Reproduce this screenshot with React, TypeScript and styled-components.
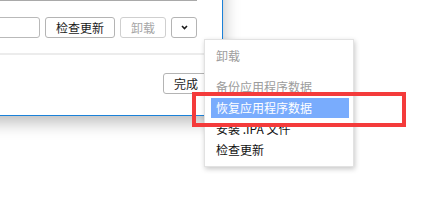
import React from 'react';
import styled, { createGlobalStyle } from 'styled-components';

const GlobalStyle = createGlobalStyle`
  html, body {
    margin: 0;
    padding: 0;
    background: #ffffff;
  }
  body {
    font-family: "Noto Sans CJK SC", "Noto Sans", sans-serif;
    font-size: 12px;
    color: #1a1a1a;
  }
`;

const Desktop = styled.div`
  position: relative;
  width: 433px;
  height: 220px;
  overflow: hidden;
  background: #ffffff;
`;

// the dialog window, mostly off the top-left of the shot
const Window = styled.div`
  position: absolute;
  left: -77px;
  top: -60px;
  width: 300px;
  height: 176px;
  box-sizing: border-box;
  border: 1px solid #1b81d8;
  background: #ffffff;
  box-shadow: 0 6px 16px rgba(0, 0, 0, 0.28);
  padding: 10px 25px 0 12px;
  display: flex;
  flex-direction: column;
`;

const ListBox = styled.div`
  height: 50px;
  box-sizing: border-box;
  border: 1px solid #a9a9a9;
  border-top: none;
`;

const Toolbar = styled.div`
  margin-top: 16px;
  display: flex;
  align-items: stretch;
  gap: 5px;
  height: 21px;
`;

const SearchInput = styled.div`
  flex: 1;
  box-sizing: border-box;
  border: 1px solid #b9b9b9;
  border-radius: 3px;
  background: #fff;
`;

const Button = styled.button<{ $disabled?: boolean }>`
  box-sizing: border-box;
  height: 21px;
  padding: 0 10px;
  border: 1px solid ${(p) => (p.$disabled ? '#cfcfcf' : '#b4b4b4')};
  border-radius: 3px;
  background: #ffffff;
  font-family: inherit;
  font-size: 12px;
  line-height: 19px;
  color: ${(p) => (p.$disabled ? '#a6a6a6' : '#1a1a1a')};
  display: flex;
  align-items: center;
  justify-content: center;
  white-space: nowrap;
`;

const IconButton = styled(Button)`
  width: 26px;
  padding: 0;
`;

const Divider = styled.div`
  margin: 15px -25px 0 -12px;
  height: 2px;
  background: #ececec;
`;

const Footer = styled.div`
  margin-top: 18px;
  margin-right: -12px;
  display: flex;
  justify-content: flex-end;
`;

const Menu = styled.div`
  position: absolute;
  left: 204px;
  top: 39px;
  width: 150px;
  height: 128px;
  box-sizing: border-box;
  padding: 5px 4px 6px 6px;
  background: #ffffff;
  border: 1px solid #e2e2e2;
  box-shadow: 1px 2px 5px rgba(0, 0, 0, 0.22);
  display: flex;
  flex-direction: column;
`;

const MenuItem = styled.div<{ $disabled?: boolean; $active?: boolean }>`
  height: 21px;
  line-height: 21px;
  padding-left: 5px;
  white-space: nowrap;
  color: ${(p) => (p.$active ? '#ffffff' : p.$disabled ? '#9c9c9c' : '#111111')};
  background: ${(p) => (p.$active ? '#79acfd' : 'transparent')};
  ${(p) => p.$active && 'margin-top: 1px; height: 20px; line-height: 20px;'}
`;

const MenuSeparator = styled.div`
  height: 2px;
  margin: 6px 0 4px;
  background: #ececec;
`;

const Highlight = styled.div`
  position: absolute;
  left: 192px;
  top: 92px;
  width: 214px;
  height: 35px;
  box-sizing: border-box;
  border: 4px solid #f43b3b;
  pointer-events: none;
`;

const Chevron: React.FC = () => (
  <svg width="7" height="5" viewBox="0 0 7 5" aria-hidden="true">
    <path d="M1 1 L3.5 3.5 L6 1" fill="none" stroke="#1a1a1a" strokeWidth="1.6" />
  </svg>
);

const menuItems = [
  { label: '备份应用程序数据', disabled: true },
  { label: '恢复应用程序数据', active: true },
  { label: '安装 .IPA 文件' },
  { label: '检查更新' },
];

const App: React.FC = () => {
  return (
    <Desktop>
      <GlobalStyle />
      <Window>
        <ListBox />
        <Toolbar>
          <SearchInput />
          <Button>检查更新</Button>
          <Button $disabled>卸载</Button>
          <IconButton>
            <Chevron />
          </IconButton>
        </Toolbar>
        <Divider />
        <Footer>
          <Button>完成</Button>
        </Footer>
      </Window>
      <Menu>
        <MenuItem $disabled>卸载</MenuItem>
        <MenuSeparator />
        {menuItems.map((item, idx) => (
          <MenuItem key={`menu-item-${idx}`} $disabled={item.disabled} $active={item.active}>
            {item.label}
          </MenuItem>
        ))}
      </Menu>
      <Highlight />
    </Desktop>
  );
};

export default App;
